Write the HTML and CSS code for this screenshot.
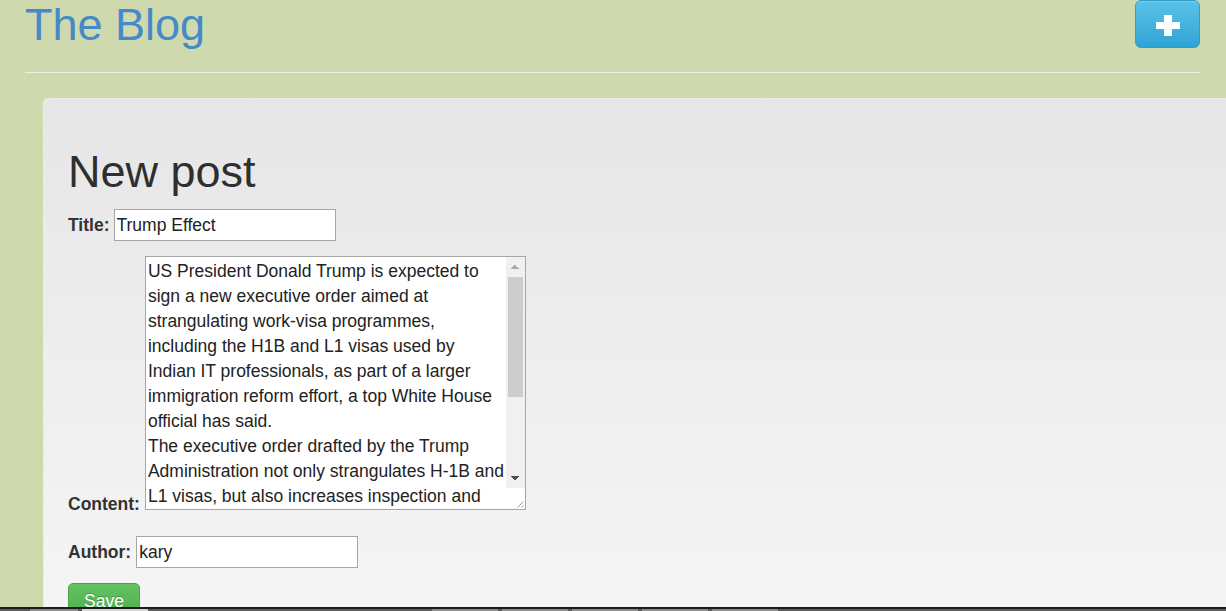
FILE: index.html
```html
<!DOCTYPE html>
<html lang="en">
<head>
<meta charset="utf-8">
<title>The Blog</title>
<link rel="stylesheet" href="styles.css">
</head>
<body>
<div class="page">
  <header class="top">
    <h1 class="brand">The Blog</h1>
    <a class="add-btn" href="#" aria-label="New post">
      <svg width="24" height="21" viewBox="0 0 24 21" aria-hidden="true">
        <rect x="0" y="7" width="24" height="7" fill="#fff"/>
        <rect x="8" y="0" width="8" height="21" fill="#fff"/>
      </svg>
    </a>
  </header>
  <hr class="rule">
  <main class="panel">
    <h2 class="heading">New post</h2>
    <form class="post-form">
      <div class="field field-title">
        <label class="lbl" for="title">Title:</label>
        <input class="txt" id="title" type="text" value="Trump Effect">
      </div>
      <div class="field field-content">
        <label class="lbl lbl-content" for="content">Content:</label>
        <div class="area-box">
          <textarea class="area" id="content">US President Donald Trump is expected to sign a new executive order aimed at strangulating work-visa programmes, including the H1B and L1 visas used by Indian IT professionals, as part of a larger immigration reform effort, a top White House official has said.
The executive order drafted by the Trump Administration not only strangulates H-1B and L1 visas, but also increases inspection and enforcement of employers that use these visas. It also calls for a review of the existing rules and policies within 90 days, and seeks to replace the lottery system with a merit-based allocation of visas to the most skilled and highest-paid applicants.</textarea>
          <div class="vscroll" aria-hidden="true">
            <span class="sb-btn sb-up"></span>
            <span class="sb-track"><span class="sb-thumb"></span></span>
            <span class="sb-btn sb-down"></span>
            <span class="sb-corner">
              <svg width="19" height="21" viewBox="0 0 19 21">
                <path d="M17.5 13.5 L11.5 19.5 M17.5 17.5 L15.5 19.5" stroke="#9a9a9a" stroke-width="1" fill="none"/>
              </svg>
            </span>
          </div>
        </div>
      </div>
      <div class="field field-author">
        <label class="lbl" for="author">Author:</label>
        <input class="txt" id="author" type="text" value="kary">
      </div>
      <button class="save" type="button">Save</button>
    </form>
  </main>
</div>
<div class="taskbar">
  <span class="tb tb-a"></span>
  <span class="tb tb-b"></span>
  <span class="tb tb-c"></span>
  <span class="tb tb-c"></span>
  <span class="tb tb-c"></span>
  <span class="tb tb-c"></span>
  <span class="tb tb-c"></span>
</div>
</body>
</html>
```
FILE: styles.css
```css
html, body {
  margin: 0;
  padding: 0;
  height: 100%;
  overflow: hidden;
}

body {
  background: #cfd9ae;
  font-family: "Liberation Sans", Arial, Helvetica, sans-serif;
  font-size: 17.5px;
  line-height: 25px;
  color: #333;
}

.page {
  padding: 0 26px 0 25px;
}

.top {
  display: flex;
  justify-content: space-between;
  align-items: flex-start;
  height: 50px;
}

.brand {
  margin: 0;
  font-size: 45px;
  line-height: 50px;
  font-weight: normal;
  color: #4589c8;
}

.add-btn {
  display: flex;
  align-items: center;
  justify-content: center;
  width: 63px;
  height: 46px;
  border: 1px solid #2f9ccb;
  border-radius: 6px;
  background: linear-gradient(#5ac2ea, #2fa4d5);
  box-shadow: inset 0 1px 0 rgba(255,255,255,0.2);
}

.add-btn svg {
  display: block;
  margin-top: 2px;
}

.rule {
  margin: 22px 0 0;
  border: 0;
  border-top: 1px solid #eef1de;
  height: 0;
}

.panel {
  margin: 25px -80px 0 18px;
  padding: 49px 25px 0;
  min-height: 560px;
  border-radius: 6px 0 0 0;
  background: linear-gradient(#e6e6e6, #f4f4f4 480px);
  box-shadow: inset 1px 1px 0 #ececec;
}

.heading {
  margin: 0;
  font-size: 45px;
  line-height: 50px;
  font-weight: normal;
  color: #2f2f2f;
}

.post-form {
  display: flex;
  flex-direction: column;
  align-items: flex-start;
}

.field {
  display: flex;
  align-items: baseline;
  gap: 4px;
}

.field-title {
  margin-top: 12px;
}

.field-content {
  margin-top: 15px;
  align-items: flex-end;
  gap: 5px;
}

.field-author {
  margin-top: 26px;
  gap: 5px;
}

.lbl {
  font-weight: bold;
  color: #333;
  line-height: 25px;
}

.lbl-content {
  margin-bottom: -7px;
}

.txt {
  box-sizing: border-box;
  width: 222px;
  height: 32px;
  margin: 0;
  padding: 0 2px;
  border: 1px solid #a6a6a6;
  background: #fff;
  font-family: inherit;
  font-size: 17.5px;
  color: #222;
  outline: none;
}

.area-box {
  box-sizing: border-box;
  display: flex;
  width: 381px;
  height: 254px;
  border: 1px solid #a6a6a6;
  background: #fff;
}

.area {
  flex: 1;
  min-width: 0;
  margin: 0;
  padding: 2px 0 2px 2px;
  border: 0;
  background: #fff;
  font-family: inherit;
  font-size: 17.5px;
  line-height: 25px;
  color: #222;
  resize: none;
  outline: none;
  overflow: hidden;
}

.vscroll {
  display: flex;
  flex-direction: column;
  width: 19px;
  flex: none;
}

.sb-btn {
  display: block;
  height: 20px;
  background-color: #f0f0f0;
  background-repeat: no-repeat;
  background-position: center;
  background-size: 8px 4px;
}

.sb-up {
  background-image: conic-gradient(from 135deg at 50% 0, #a6a6a6 0deg 90deg, transparent 90deg);
}

.sb-down {
  background-image: conic-gradient(from -45deg at 50% 100%, #4f4f4f 0deg 90deg, transparent 90deg);
}

.sb-track {
  display: block;
  flex: 1;
  background: #f0f0f0;
}

.sb-thumb {
  display: block;
  width: 15px;
  height: 120px;
  margin-left: 2px;
  background: #cdcdcd;
}

.sb-corner {
  display: block;
  height: 21px;
  background: #fff;
}

.sb-corner svg {
  display: block;
}

.save {
  margin-top: 15px;
  padding: 5px 15px;
  border: 1px solid #47a447;
  border-radius: 5px;
  background: linear-gradient(#62c462, #4ea94e);
  color: #fff;
  font-family: inherit;
  font-size: 17.5px;
  line-height: 25px;
  text-shadow: 0 -1px 0 rgba(0,0,0,0.25);
}

.taskbar {
  position: fixed;
  left: 0;
  right: 0;
  bottom: 0;
  height: 2px;
  border-top: 2px solid #1b1b1b;
  background: #5a5a5a;
  display: flex;
  gap: 4px;
  padding-left: 30px;
}

.tb {
  display: block;
  height: 2px;
  background: #8a8a8a;
}

.tb-a {
  width: 48px;
}

.tb-b {
  width: 66px;
  background: #d8d8d8;
  margin-right: 280px;
}

.tb-c {
  width: 66px;
}
```
